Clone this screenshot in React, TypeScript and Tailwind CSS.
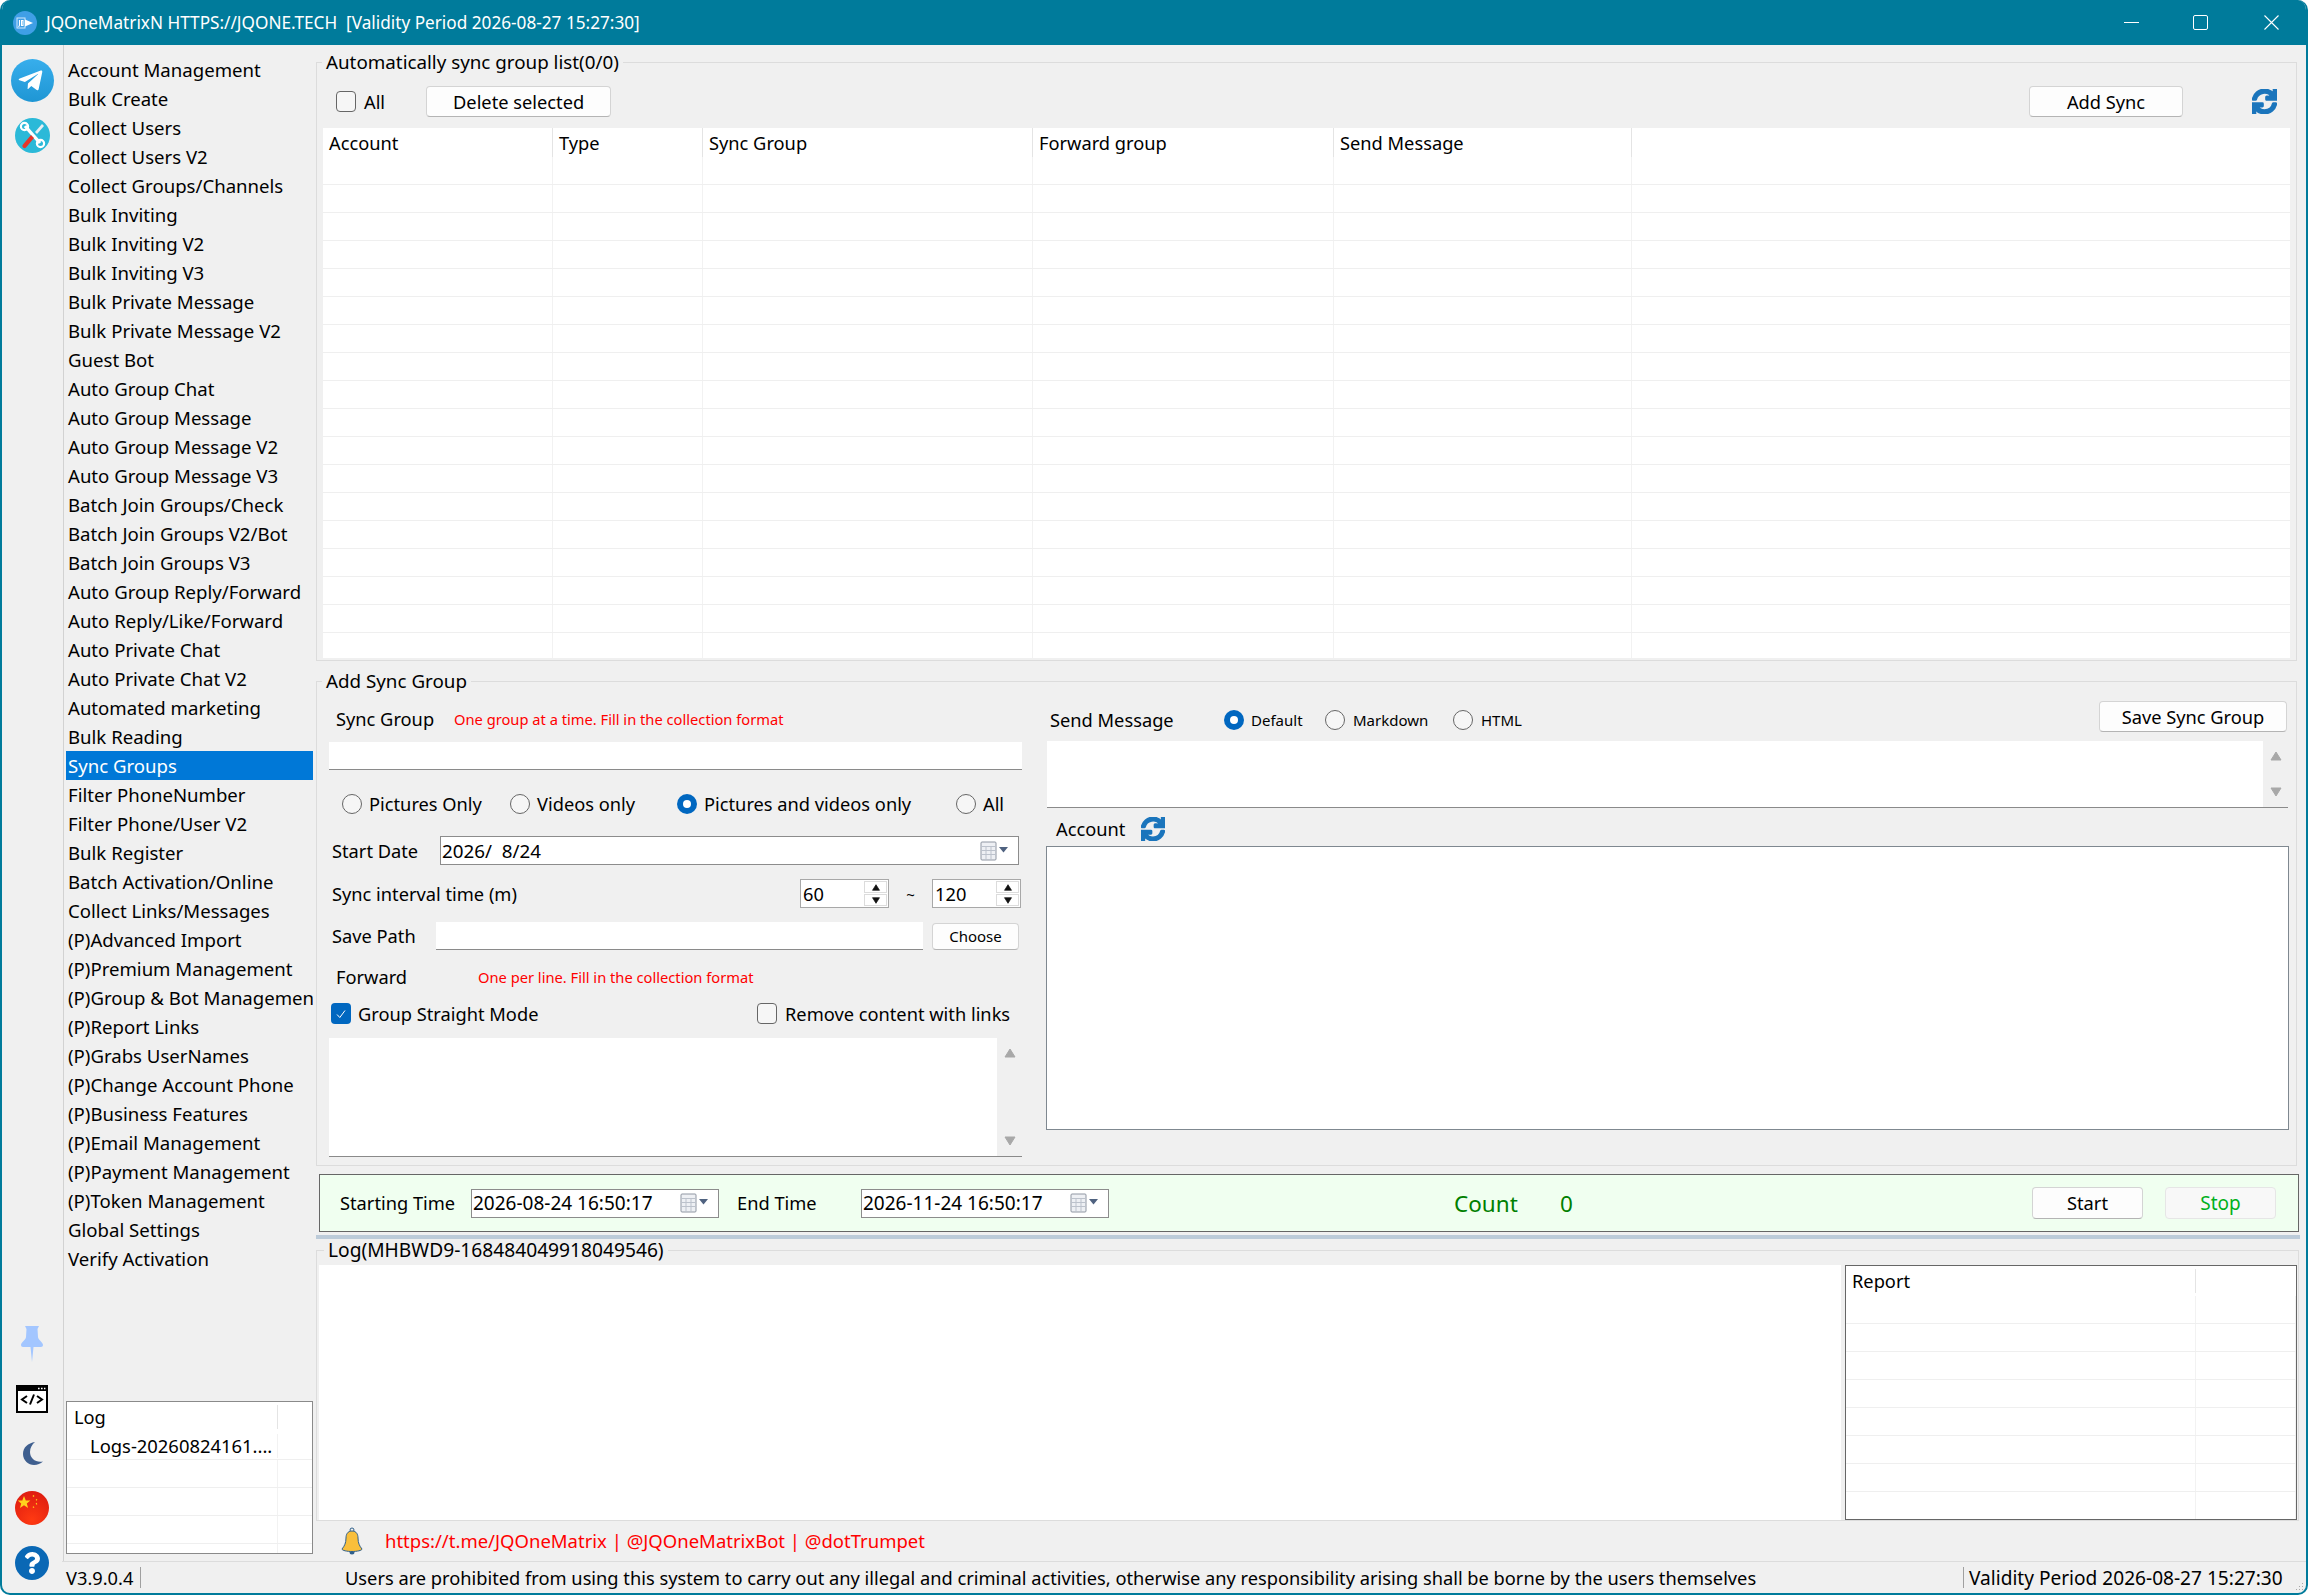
import { FaQuestion, FaSync, FaTelegramPlane } from "react-icons/fa";

const navItems = [
  "Account Management",
  "Bulk Create",
  "Collect Users",
  "Collect Users V2",
  "Collect Groups/Channels",
  "Bulk Inviting",
  "Bulk Inviting V2",
  "Bulk Inviting V3",
  "Bulk Private Message",
  "Bulk Private Message V2",
  "Guest Bot",
  "Auto Group Chat",
  "Auto Group Message",
  "Auto Group Message V2",
  "Auto Group Message V3",
  "Batch Join Groups/Check",
  "Batch Join Groups V2/Bot",
  "Batch Join Groups V3",
  "Auto Group Reply/Forward",
  "Auto Reply/Like/Forward",
  "Auto Private Chat",
  "Auto Private Chat V2",
  "Automated marketing",
  "Bulk Reading",
  "Sync Groups",
  "Filter PhoneNumber",
  "Filter Phone/User V2",
  "Bulk Register",
  "Batch Activation/Online",
  "Collect Links/Messages",
  "(P)Advanced Import",
  "(P)Premium Management",
  "(P)Group & Bot Management",
  "(P)Report Links",
  "(P)Grabs UserNames",
  "(P)Change Account Phone",
  "(P)Business Features",
  "(P)Email Management",
  "(P)Payment Management",
  "(P)Token Management",
  "Global Settings",
  "Verify Activation",
];

const syncColumns = [
  { name: "Account", width: 230 },
  { name: "Type", width: 150 },
  { name: "Sync Group", width: 330 },
  { name: "Forward group", width: 301 },
  { name: "Send Message", width: 298 },
];

function Radio({ checked }: { checked?: boolean }) {
  if (checked) {
    return (
      <span className="flex h-5 w-5 shrink-0 items-center justify-center rounded-full bg-[#0067c0]">
        <span className="h-2 w-2 rounded-full bg-white" />
      </span>
    );
  }
  return <span className="h-5 w-5 shrink-0 rounded-full border border-[#666] bg-[#f6f6f6]" />;
}

function Checkbox() {
  return <span className="h-[21px] w-5 shrink-0 rounded-[4px] border border-[#666] bg-[#f6f6f6]" />;
}

function Button({ label, className }: { label: string; className: string }) {
  return (
    <button className={`flex items-center justify-center rounded-[4px] border border-[#d4d4d4] border-b-[#b4b4b4] bg-[#fdfdfd] ${className}`}>
      {label}
    </button>
  );
}

function CalendarIcon() {
  return (
    <svg width="28" height="20" viewBox="0 0 28 20" className="shrink-0">
      <rect x="1" y="1" width="15" height="18" rx="1" fill="#eef0f4" stroke="#8f96a2" />
      <path d="M1 5.500h15M1 9.500h15M1 13.500h15M6 5.500V19M11 5.500V19" stroke="#bcc2cc" fill="none" />
      <path d="M19 6h9l-4.500 5.500z" fill="#4f6280" />
    </svg>
  );
}

function DateField({ value, className }: { value: string; className: string }) {
  return (
    <div className={`flex h-[29px] shrink-0 items-center justify-between border border-[#8c8c8c] bg-white pl-[1px] pr-[10px] ${className}`}>
      <span>{value}</span>
      <CalendarIcon />
    </div>
  );
}

function Triangle({ down, color, width, height }: { down?: boolean; color: string; width: number; height: number }) {
  return (
    <svg width={width} height={height} viewBox="0 0 12 10">
      <path d={down ? "M1 1h10l-5 8z" : "M6 1l5 8H1z"} fill={color} stroke={color} strokeLinejoin="round" />
    </svg>
  );
}

function Spinner({ value }: { value: string }) {
  return (
    <div className="flex h-[29px] w-[89px] items-center justify-between border border-[#a8a8a8] bg-white pl-[2px] pr-[1px]">
      <span>{value}</span>
      <div className="flex w-[23px] flex-col gap-[1px]">
        <span className="flex h-[12px] items-center justify-center border border-[#dcdcdc]">
          <Triangle color="#111" width={10} height={7} />
        </span>
        <span className="flex h-[12px] items-center justify-center border border-[#dcdcdc]">
          <Triangle down color="#111" width={10} height={7} />
        </span>
      </div>
    </div>
  );
}

function ScrollBar() {
  return (
    <div className="flex w-[25px] flex-col items-center justify-between bg-[#f0f0f0] py-[10px]">
      <Triangle color="#a8a8a8" width={12} height={10} />
      <Triangle down color="#a8a8a8" width={12} height={10} />
    </div>
  );
}

function RefreshIcon({ size, className }: { size: number; className: string }) {
  return <FaSync size={size} stroke="currentColor" strokeWidth={36} className={`text-[#1b75bc] ${className}`} />;
}

function GridRows({ count, widths, height }: { count: number; widths: number[]; height: number }) {
  return (
    <>
      {Array.from({ length: count }).map((_, i) => (
        <div key={i} className="flex shrink-0 border-b border-[#efefef]" style={{ height }}>
          {widths.map((w, j) => (
            <div key={j} className="shrink-0 border-r border-[#f2f2f2]" style={{ width: w }} />
          ))}
        </div>
      ))}
    </>
  );
}

function TelegramIcon() {
  return (
    <span className="flex h-[43px] w-[43px] items-center justify-center rounded-full bg-gradient-to-b from-[#37aeec] to-[#1e96d4] text-white">
      <FaTelegramPlane size={27} className="-ml-[3px]" />
    </span>
  );
}

function ToolsIcon() {
  return (
    <svg width="35" height="35" viewBox="0 0 35 35">
      <circle cx="17.5" cy="17.5" r="17.5" fill="#2bb9d8" />
      <path d="M10 8l15 17" stroke="#fff" strokeWidth="3.4" />
      <circle cx="9.5" cy="8.5" r="3.6" fill="none" stroke="#fff" strokeWidth="2.2" />
      <circle cx="25.5" cy="25.5" r="3.6" fill="none" stroke="#fff" strokeWidth="2.2" />
      <path d="M27 6l2 2-7 8-2-2z" fill="#e8eef2" />
      <path d="M16 17l3 3-8 9.5a2 2 0 0 1-3-3z" fill="#e5352b" />
    </svg>
  );
}

function PinIcon() {
  return (
    <svg width="22" height="36" viewBox="0 0 22 36">
      <path d="M4 0h14l-1.500 3 .5 8c0 3 5 5 5 8 0 1.200-.8 2-2 2h-7.500L11 36 9.500 21H2c-1.200 0-2-.8-2-2 0-3 5-5 5-8l.5-8z" fill="#a3c6ff" />
    </svg>
  );
}

function MoonIcon() {
  return (
    <svg width="20" height="23" viewBox="0 0 20 23">
      <path d="M12 0C5 1 0 5.500 0 12c0 6.500 5.500 11 11 11 3.500 0 6.500-1.500 9-3.500-7 1.500-13-3-13-9.500 0-4 2-7.500 5-10z" fill="#3f5f8f" />
    </svg>
  );
}

function CodeWindowIcon() {
  return (
    <svg width="32" height="28" viewBox="0 0 32 28">
      <rect x="1" y="1" width="30" height="26" fill="#fff" stroke="#000" strokeWidth="2" />
      <rect x="1" y="1" width="30" height="5" fill="#000" />
      <path d="M22 3.500h1.600M25 3.500h1.600M28 3.500h1.400" stroke="#fff" strokeWidth="1.600" />
      <path d="M11 11l-5 3.500 5 3.500M21 11l5 3.500-5 3.500M18 9.500l-4 10" stroke="#000" strokeWidth="2" fill="none" />
    </svg>
  );
}

function FlagIcon() {
  return (
    <svg width="34" height="34" viewBox="0 0 34 34">
      <defs>
        <radialGradient id="flagFill" cx="0.5" cy="0.85" r="0.9">
          <stop offset="0" stopColor="#ff3a12" />
          <stop offset="1" stopColor="#dc1a10" />
        </radialGradient>
      </defs>
      <circle cx="17" cy="17" r="17" fill="url(#flagFill)" />
      <path d="M9 5l1.800 4.400 4.600.2-3.600 2.800 1.300 4.500L9 14.300l-4 2.600 1.200-4.500-3.500-2.800 4.600-.2z" fill="#ffd21e" />
      <path d="M18 4.500l1 1M21 8.500l1 .6M21 13l1-.5M18 16.500l1-.8" stroke="#ffd21e" strokeWidth="1.400" />
    </svg>
  );
}

function BellIcon() {
  return (
    <svg width="22" height="28" viewBox="0 0 22 28">
      <circle cx="11" cy="3" r="2" fill="none" stroke="#2f5f8a" strokeWidth="1" />
      <path d="M11 4c-4.500 0-6 3.500-6 7 0 5-1.500 8-4 11 0 1.500 5 2.500 10 2.500s10-1 10-2.500c-2.500-3-4-6-4-11 0-3.500-1.500-7-6-7z" fill="#f9bf3b" stroke="#2f5f8a" strokeWidth="1" />
      <path d="M8.500 25a2.500 2.500 0 0 0 5 0z" fill="#2f5f8a" />
    </svg>
  );
}

function Logo() {
  return (
    <svg width="24" height="24" viewBox="0 0 24 24" className="shrink-0">
      <circle cx="12" cy="12" r="12" fill="#3f9fe6" />
      <rect x="4" y="7" width="8" height="10" fill="none" stroke="#cfe8fa" strokeWidth="1" />
      <path d="M12 8.500l8 3.500-8 3.500z" fill="#fff" />
      <path d="M6.500 9v5c0 1-.6 1.500-1.200 1.500M8.500 9.500h1.500v5H8.500z" stroke="#fff" strokeWidth="1.100" fill="none" />
    </svg>
  );
}

export default function App() {
  const reportWidths = [350, 100];
  const logWidths = [211, 36];

  return (
    <div className="flex h-[1595px] w-[2308px] flex-col overflow-hidden rounded-[10px] border-x-2 border-b-2 border-[#007b9b] bg-[#f0f0f0] font-['Noto_Sans','Open_Sans',sans-serif] text-[18.25px] leading-[24px] text-black">
      {/* title bar */}
      <div className="-mx-[2px] flex h-[45px] shrink-0 items-center bg-[#007b9b] pl-[13px] text-[17.2px] text-white">
        <Logo />
        <span className="ml-[9px] whitespace-pre">JQOneMatrixN HTTPS://JQONE.TECH  [Validity Period 2026-08-27 15:27:30]</span>
        <div className="ml-auto flex items-center pr-[29px]">
          <span className="h-[1px] w-[15px] bg-white" />
          <span className="ml-[54px] h-[15px] w-[15px] rounded-[2px] border border-white" />
          <svg width="15" height="15" viewBox="0 0 15 15" className="ml-[56px]">
            <path d="M0.500 0.500l14 14M14.500 0.500l-14 14" stroke="#fff" strokeWidth="1.100" />
          </svg>
        </div>
      </div>

      <div className="flex min-h-0 flex-1">
        {/* icon rail */}
        <div className="flex w-[60px] shrink-0 flex-col items-center pb-[13px] pt-[14px]">
          <TelegramIcon />
          <div className="mt-[16px]">
            <ToolsIcon />
          </div>
          <div className="mt-auto flex flex-col items-center">
            <PinIcon />
            <div className="mt-[23px]">
              <CodeWindowIcon />
            </div>
            <div className="ml-[2px] mt-[29px]">
              <MoonIcon />
            </div>
            <div className="mt-[26px]">
              <FlagIcon />
            </div>
            <span className="mt-[21px] flex h-[34px] w-[34px] items-center justify-center rounded-full bg-[#0a68b5] text-white">
              <FaQuestion size={22} />
            </span>
          </div>
        </div>

        <div className="flex min-w-0 flex-1 flex-col">
          <div className="flex min-h-0 flex-1">
            {/* nav */}
            <div className="ml-[1px] flex w-[253px] shrink-0 flex-col border-l border-[#d2d2d2] pl-[2px] pt-[10px]">
              {navItems.map((item) => (
                <div
                  key={item}
                  className={`h-[29px] w-[247px] overflow-hidden whitespace-nowrap pl-[2px] text-[18.6px] leading-[29px] ${item === "Sync Groups" ? "bg-[#0078d7] text-white" : ""}`}
                >
                  {item}
                </div>
              ))}
              <div className="mb-[7px] mt-auto flex h-[153px] w-[247px] flex-col overflow-hidden border border-[#8a8a8a] bg-white">
                <div className="flex h-[30px] shrink-0 items-center">
                  <span className="w-[211px] border-r border-[#e4e4e4] pl-[7px]">Log</span>
                </div>
                <div className="flex h-[28px] shrink-0 items-center border-b border-[#efefef]">
                  <span className="w-[211px] overflow-hidden whitespace-nowrap border-r border-[#f2f2f2] pl-[23px] text-[18.4px]">Logs-20260824161....</span>
                </div>
                <GridRows count={4} widths={logWidths} height={28} />
              </div>
            </div>

            {/* content */}
            <div className="flex w-[1990px] shrink-0 flex-col pt-[4px]">
              <fieldset className="h-[612px] w-[1981px] shrink-0 border border-[#dcdcdc]">
                <legend className="ml-[5px] px-[4px] text-[18.8px] leading-[26px]">Automatically sync group list(0/0)</legend>
                <div className="mt-[11px] flex h-[31px] items-center pl-[19px] pr-[19px]">
                  <Checkbox />
                  <span className="ml-[8px]">All</span>
                  <Button label="Delete selected" className="ml-[41px] h-[31px] w-[185px]" />
                  <Button label="Add Sync" className="ml-auto h-[31px] w-[154px]" />
                  <RefreshIcon size={25} className="ml-[69px]" />
                </div>
                <div className="ml-[6px] mt-[11px] flex h-[530px] w-[1967px] flex-col overflow-hidden bg-white">
                  <div className="flex h-[29px] shrink-0">
                    {syncColumns.map((col) => (
                      <div key={col.name} className="shrink-0 border-r border-[#e4e4e4] pl-[6px] pt-[3px]" style={{ width: col.width }}>
                        {col.name}
                      </div>
                    ))}
                  </div>
                  <GridRows count={18} widths={syncColumns.map((c) => c.width)} height={28} />
                </div>
              </fieldset>

              <fieldset className="mt-[7px] flex h-[498px] w-[1981px] shrink-0 border border-[#dcdcdc] pl-[12px]">
                <legend className="ml-[-7px] px-[4px] text-[18.8px] leading-[26px]">Add Sync Group</legend>
                <div className="flex">
                  <div className="flex w-[693px] shrink-0 flex-col">
                    <div className="mt-[13px] flex h-[24px] items-center pl-[7px]">
                      <span className="w-[118px]">Sync Group</span>
                      <span className="text-[14.7px] text-[#ff0000]">One group at a time. Fill in the collection format</span>
                    </div>
                    <div className="mt-[11px] h-[28px] border-b border-[#8a8a8a] bg-white" />
                    <div className="mt-[22px] flex h-[24px] items-center pl-[13px]">
                      <div className="flex w-[168px] items-center gap-[7px]"><Radio /><span>Pictures Only</span></div>
                      <div className="flex w-[167px] items-center gap-[7px]"><Radio /><span>Videos only</span></div>
                      <div className="flex w-[279px] items-center gap-[7px]"><Radio checked /><span>Pictures and videos only</span></div>
                      <div className="flex items-center gap-[7px]"><Radio /><span>All</span></div>
                    </div>
                    <div className="mt-[20px] flex h-[29px] items-center pl-[3px]">
                      <span className="w-[108px]">Start Date</span>
                      <DateField value="2026/  8/24" className="w-[579px] whitespace-pre text-[18.8px]" />
                    </div>
                    <div className="mt-[14px] flex h-[29px] items-center pl-[3px] pr-[1px]">
                      <span>Sync interval time (m)</span>
                      <div className="ml-auto"><Spinner value="60" /></div>
                      <span className="w-[43px] text-center text-[15px]">~</span>
                      <Spinner value="120" />
                    </div>
                    <div className="mt-[14px] flex h-[28px] items-center pl-[3px]">
                      <span className="w-[104px]">Save Path</span>
                      <div className="h-[28px] w-[487px] border-b border-[#8a8a8a] bg-white" />
                      <Button label="Choose" className="ml-[9px] h-[27px] w-[87px] text-[15px]" />
                    </div>
                    <div className="mt-[15px] flex h-[24px] items-center pl-[7px]">
                      <span className="w-[142px]">Forward</span>
                      <span className="text-[14.7px] text-[#ff0000]">One per line. Fill in the collection format</span>
                    </div>
                    <div className="mt-[14px] flex h-[21px] items-center pl-[2px]">
                      <span className="flex h-[21px] w-5 shrink-0 items-center justify-center rounded-[4px] bg-[#0067c0]">
                        <svg width="12" height="12" viewBox="0 0 12 12">
                          <path d="M2 6.500l2.800 3L10 2.500" stroke="#fff" strokeWidth="1" fill="none" />
                        </svg>
                      </span>
                      <span className="ml-[7px] w-[399px]">Group Straight Mode</span>
                      <Checkbox />
                      <span className="ml-[8px]">Remove content with links</span>
                    </div>
                    <div className="mt-[14px] flex h-[119px] justify-end border-b border-[#8a8a8a] bg-white">
                      <ScrollBar />
                    </div>
                  </div>

                  <div className="ml-[24px] flex w-[1243px] shrink-0 flex-col">
                    <div className="mt-[7px] flex h-[31px] items-center pr-[2px]">
                      <div className="flex items-center pl-[4px] pt-[6px]">
                        <span className="w-[174px]">Send Message</span>
                        <div className="flex w-[101px] items-center gap-[7px] text-[15px]"><Radio checked /><span>Default</span></div>
                        <div className="flex w-[128px] items-center gap-[8px] text-[15px]"><Radio /><span>Markdown</span></div>
                        <div className="flex items-center gap-[8px] text-[15px]"><Radio /><span>HTML</span></div>
                      </div>
                      <Button label="Save Sync Group" className="ml-auto h-[31px] w-[188px]" />
                    </div>
                    <div className="ml-[1px] mt-[9px] flex h-[67px] w-[1241px] justify-end border-b border-[#8a8a8a] bg-white">
                      <ScrollBar />
                    </div>
                    <div className="mt-[9px] flex h-[24px] items-center pl-[10px]">
                      <span>Account</span>
                      <RefreshIcon size={24} className="ml-[16px]" />
                    </div>
                    <div className="mt-[5px] h-[284px] border border-[#7f8890] bg-white" />
                  </div>
                </div>
              </fieldset>

              {/* time bar */}
              <div className="ml-[3px] mt-[8px] flex h-[58px] w-[1980px] shrink-0 items-center border border-[#666] bg-[#f0fff0] pl-[20px] pr-[22px]">
                <span className="w-[131px]">Starting Time</span>
                <DateField value="2026-08-24 16:50:17" className="w-[248px] text-[19px]" />
                <span className="ml-[18px] w-[124px]">End Time</span>
                <DateField value="2026-11-24 16:50:17" className="w-[248px] text-[19px]" />
                <span className="ml-[345px] w-[106px] pt-[2px] text-[22.5px] text-[#008000]">Count</span>
                <span className="pt-[2px] text-[22.5px] text-[#008000]">0</span>
                <Button label="Start" className="ml-auto h-[32px] w-[111px]" />
                <button className="ml-[22px] h-[32px] w-[111px] rounded-[4px] border border-[#e6e6e6] bg-[#f8f8f8] text-[19px] text-[#00b020]">Stop</button>
              </div>
              <div className="mt-[3px] h-[4px] w-[1984px] shrink-0 bg-[#bccbd9]" />

              {/* log */}
              <fieldset className="flex h-[282px] w-[1983px] shrink-0 border border-[#dcdcdc] pl-[2px]">
                <legend className="ml-[5px] px-[4px] text-[19.2px] leading-[22px]">Log(MHBWD9-168484049918049546)</legend>
                <div className="mt-[4px] flex h-[255px]">
                  <div className="h-full w-[1522px] bg-white" />
                  <div className="ml-[4px] flex h-full w-[452px] flex-col overflow-hidden border border-[#666] bg-white">
                    <div className="flex h-[30px] shrink-0 items-center">
                      <span className="w-[350px] border-r border-[#e4e4e4] pl-[6px]">Report</span>
                    </div>
                    <GridRows count={8} widths={reportWidths} height={28} />
                  </div>
                </div>
              </fieldset>

              <div className="flex min-h-0 flex-1 items-center pl-[25px]">
                <BellIcon />
                <span className="ml-[22px] text-[18.5px] text-[#ff0000]">https://t.me/JQOneMatrix | @JQOneMatrixBot | @dotTrumpet</span>
              </div>
            </div>
          </div>

          {/* status bar */}
          <div className="relative flex h-[32px] shrink-0 items-center border-t border-[#dcdcdc]">
            <span className="flex h-[21px] w-[79px] items-center whitespace-nowrap border-r border-[#a0a0a0] pl-[4px]">V3.9.0.4</span>
            <span className="w-[1822px] whitespace-nowrap pl-[204px] text-[18.25px]">Users are prohibited from using this system to carry out any illegal and criminal activities, otherwise any responsibility arising shall be borne by the users themselves</span>
            <span className="flex h-[21px] items-center whitespace-nowrap border-l border-[#a0a0a0] pl-[5px] text-[19.1px]">Validity Period 2026-08-27 15:27:30</span>
            <svg width="10" height="10" viewBox="0 0 10 10" className="absolute bottom-[1px] right-[2px]">
              <path d="M8 1h1v1H8zM5 4h1v1H5zM8 4h1v1H8zM2 7h1v1H2zM5 7h1v1H5zM8 7h1v1H8z" fill="#a8a8a8" />
            </svg>
          </div>
        </div>
      </div>
    </div>
  );
}
